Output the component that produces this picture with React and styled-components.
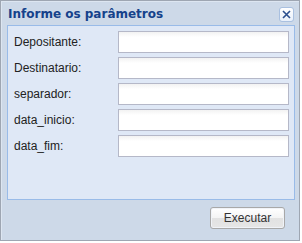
import React from "react";
import styled, { createGlobalStyle } from "styled-components";

const Global = createGlobalStyle`
  html, body { margin: 0; padding: 0; background: #ffffff; }
  * { box-sizing: border-box; }
`;

const Window = styled.div`
  width: 300px;
  height: 241px;
  border: 1px solid #9ea6b2;
  background: #cdd9e8;
  box-shadow: inset 1px 1px 0 #dde6f1;
  display: flex;
  flex-direction: column;
  padding: 0 4px 0 6px;
`;

const Header = styled.div`
  height: 24px;
  display: flex;
  align-items: center;
  justify-content: space-between;
`;

const Title = styled.div`
  font-family: "DejaVu Sans", Verdana, sans-serif;
  font-weight: bold;
  font-size: 12px;
  color: #15428b;
  padding-left: 1px;
  padding-top: 1px;
`;

const CloseButton = styled.div`
  width: 15px;
  height: 15px;
  margin-top: 3px;
  margin-right: 1px;
  border: 1px solid #a9c0e0;
  border-radius: 3px;
  background: linear-gradient(#ffffff, #e8f0fb);
  display: flex;
  align-items: center;
  justify-content: center;
`;

const Panel = styled.div`
  height: 175px;
  border: 1px solid #99bbe8;
  background: #dfe8f6;
  padding: 5px 5px 0 6px;
  display: flex;
  flex-direction: column;
  gap: 4px;
`;

const Row = styled.div`
  display: flex;
  align-items: center;
  height: 22px;
`;

const Label = styled.label`
  width: 104px;
  font-family: "Liberation Sans", Arial, sans-serif;
  font-size: 12px;
  color: #222;
`;

const Input = styled.div`
  flex: 1;
  height: 22px;
  border: 1px solid #b5b8c8;
  background: linear-gradient(#f2f2f2, #ffffff 5px, #ffffff);
`;

const Footer = styled.div`
  flex: 1;
  display: flex;
  justify-content: flex-end;
  align-items: flex-start;
  padding-top: 7px;
  padding-right: 10px;
`;

const Button = styled.div`
  width: 75px;
  height: 22px;
  border: 1px solid #a8a8a8;
  border-radius: 3px;
  background: linear-gradient(#ffffff 0%, #f4f4f4 50%, #e2e2e2 51%, #e6e6e6 100%);
  font-family: "Liberation Sans", Arial, sans-serif;
  font-size: 12px;
  color: #333;
  display: flex;
  align-items: center;
  justify-content: center;
  box-shadow: 0 0 0 1px #f0f3f8 inset;
`;

const fields = ["Depositante:", "Destinatario:", "separador:", "data_inicio:", "data_fim:"];

export default function App() {
  return (
    <>
      <Global />
      <Window>
        <Header>
          <Title>Informe os parâmetros</Title>
          <CloseButton>
            <svg width="9" height="9" viewBox="0 0 9 9">
              <path d="M1 1 L8 8 M8 1 L1 8" stroke="#2b4f8f" strokeWidth="1.6" />
            </svg>
          </CloseButton>
        </Header>
        <Panel>
          {fields.map((f) => (
            <Row key={f}>
              <Label>{f}</Label>
              <Input />
            </Row>
          ))}
        </Panel>
        <Footer>
          <Button>Executar</Button>
        </Footer>
      </Window>
    </>
  );
}
